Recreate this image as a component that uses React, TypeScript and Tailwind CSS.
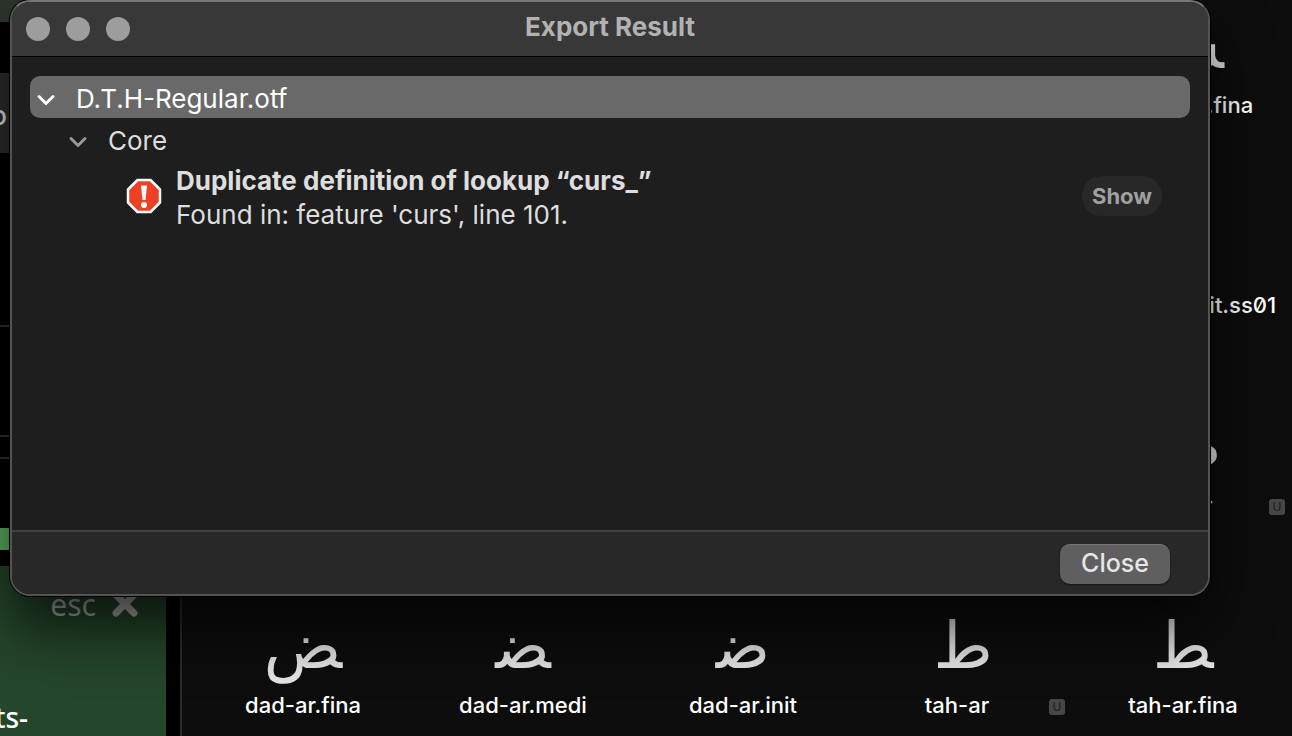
import React from "react";
import clsx from "clsx";
import { ChevronDown } from "lucide-react";

type Glyph = {
  char: string;
  label: string;
  unicode?: boolean;
};

// "\u200d" joins the letter to a neighbour so that the right form is shown
const rows: (Glyph | null)[][] = [
  [null, null, null, null, { char: "\u200dش", label: "sheen-ar.fina" }],
  [null, null, null, null, { char: "ش\u200d", label: "sheen-ar.init.ss01" }],
  [null, null, null, null, { char: "ض", label: "dad-ar", unicode: true }],
  [
    { char: "\u200dض", label: "dad-ar.fina" },
    { char: "\u200dض\u200d", label: "dad-ar.medi" },
    { char: "ض\u200d", label: "dad-ar.init" },
    { char: "ط", label: "tah-ar", unicode: true },
    { char: "\u200dط", label: "tah-ar.fina" },
  ],
];

const GlyphCell = ({ glyph }: { glyph: Glyph | null }) => {
  if (!glyph) return <div />;
  return (
    <div className="flex flex-col justify-end">
      <div
        lang="ar"
        className="h-[84px] text-center font-['DejaVu_Sans',sans-serif] text-[64px] leading-[80px] text-neutral-200"
      >
        {glyph.char}
      </div>
      <div className="flex h-[30px] items-center">
        <span
          className={clsx(
            "flex flex-1 justify-center whitespace-nowrap text-[22px] leading-[30px] font-medium text-white slashed-zero",
            glyph.unicode && "pl-3"
          )}
        >
          {glyph.label}
        </span>
        {glyph.unicode && (
          <span className="mt-1 mr-2 flex size-4 items-center justify-center rounded-[3px] bg-[#474747] text-[12px] leading-4 text-[#1c1c1c]">
            U
          </span>
        )}
      </div>
    </div>
  );
};

const Sidebar = () => {
  return (
    <aside className="flex w-[180px] shrink-0 flex-col bg-black">
      <div className="h-[22px] bg-[#2b362b]" />
      <div className="mt-[51px] flex h-20 items-center bg-[#2e2e2e] pt-1">
        <span className="flex w-[7px] justify-end overflow-hidden text-[26px] font-medium text-neutral-200">
          o
        </span>
      </div>
      <div className="mt-[172px] h-[2px] bg-[#333]" />
      <div className="mt-[108px] h-6 border-y-2 border-[#333]" />
      <div className="mt-[69px] h-[22px] bg-[#5db463]" />
      <div className="mt-4 mr-[14px] flex flex-1 flex-col justify-between bg-[#24462a] pt-5 font-['Noto_Sans',sans-serif] text-[28px]">
        <button className="flex h-10 items-center justify-end gap-4 pr-7 pb-1 text-[30px] text-[#b0b0b0]">
          esc
          <svg viewBox="0 0 26 26" className="size-[26px]">
            <path
              d="M4 4 22 22M22 4 4 22"
              stroke="currentColor"
              strokeWidth="7"
              strokeLinecap="round"
            />
          </svg>
        </button>
        <span className="flex h-[38px] w-7 items-center justify-end overflow-hidden font-medium text-white">
          ts-
        </span>
      </div>
    </aside>
  );
};

const ErrorIcon = () => {
  return (
    <svg viewBox="0 0 36 36" className="size-9 shrink-0">
      <path
        d="M11.500 2h13L34 11.500v13L24.500 34h-13L2 24.500v-13z"
        fill="#ee4023"
        stroke="#fff"
        strokeWidth="2.500"
        strokeLinejoin="round"
      />
      <path d="M15 7.500h6L19.500 22h-3z" fill="#fff" />
      <circle cx="18" cy="27" r="3" fill="#fff" />
    </svg>
  );
};

const ExportDialog = () => {
  return (
    <section
      role="dialog"
      aria-labelledby="dialog-title"
      className="absolute top-0 right-[82px] left-[10px] overflow-hidden rounded-[20px] border-2 border-[#535353] border-t-[#777] bg-[#1e1e1e] shadow-[0_0_0_1px_#000,0_32px_60px_rgba(0,0,0,0.7)]"
    >
      <header className="grid h-[55px] grid-cols-[1fr_auto_1fr] items-center border-b border-black bg-[#383838] px-[14px]">
        <div className="flex gap-4">
          <button aria-label="Close window" className="size-6 rounded-full bg-[#9d9d9d]" />
          <button aria-label="Minimize" className="size-6 rounded-full bg-[#9d9d9d]" />
          <button aria-label="Zoom" className="size-6 rounded-full bg-[#9d9d9d]" />
        </div>
        <h1 id="dialog-title" className="pb-1 text-[26px] leading-8 font-bold text-[#b2b2b2]">
          Export Result
        </h1>
      </header>

      <div className="min-h-[473px] px-[18px] pt-[19px] text-[26px] text-[#dedede]">
        <div className="flex h-[42px] items-center rounded-[10px] bg-[#696969] pt-[2px] pl-[2px] text-white">
          <ChevronDown className="mt-1 size-7" strokeWidth={2.5} />
          <span className="ml-4">D.T.H-Regular.otf</span>
        </div>
        <div className="flex h-[42px] items-center pt-[2px] pl-[34px]">
          <ChevronDown className="mt-1 size-7 text-[#999]" strokeWidth={2.5} />
          <span className="ml-4">Core</span>
        </div>
        <div className="flex h-[72px] items-center pr-7 pl-24">
          <ErrorIcon />
          <div className="ml-[14px] flex-1 pt-1 leading-[34px]">
            <p className="font-bold">Duplicate definition of lookup “curs_”</p>
            <p>Found in: feature 'curs', line 101.</p>
          </div>
          <button className="h-10 w-20 rounded-full bg-[#282828] text-[22px] font-bold text-[#a0a0a0]">
            Show
          </button>
        </div>
      </div>

      <footer className="flex h-16 items-start justify-end border-t-2 border-[#404040] bg-[#282828] pt-3 pr-[38px]">
        <button className="h-10 w-[110px] rounded-[10px] border-t border-[#777] bg-[#5f5f5f] pb-1 text-[25px] font-medium text-[#e6e6e6] shadow-[0_1px_2px_rgba(0,0,0,0.5)]">
          Close
        </button>
      </footer>
    </section>
  );
};

const App = () => {
  return (
    <div className="relative flex h-screen overflow-hidden bg-[#0d0d0d] font-['Inter',sans-serif]">
      <Sidebar />
      <main className="flex-1 overflow-hidden border-l-2 border-[#2b2b2b] pl-[11px]">
        {rows.map((row, i) => (
          <div
            key={i}
            className="grid h-[200px] grid-cols-[repeat(5,220px)] first:h-[120px]"
          >
            {row.map((glyph, j) => (
              <GlyphCell key={j} glyph={glyph} />
            ))}
          </div>
        ))}
      </main>
      <ExportDialog />
    </div>
  );
};

export default App;
